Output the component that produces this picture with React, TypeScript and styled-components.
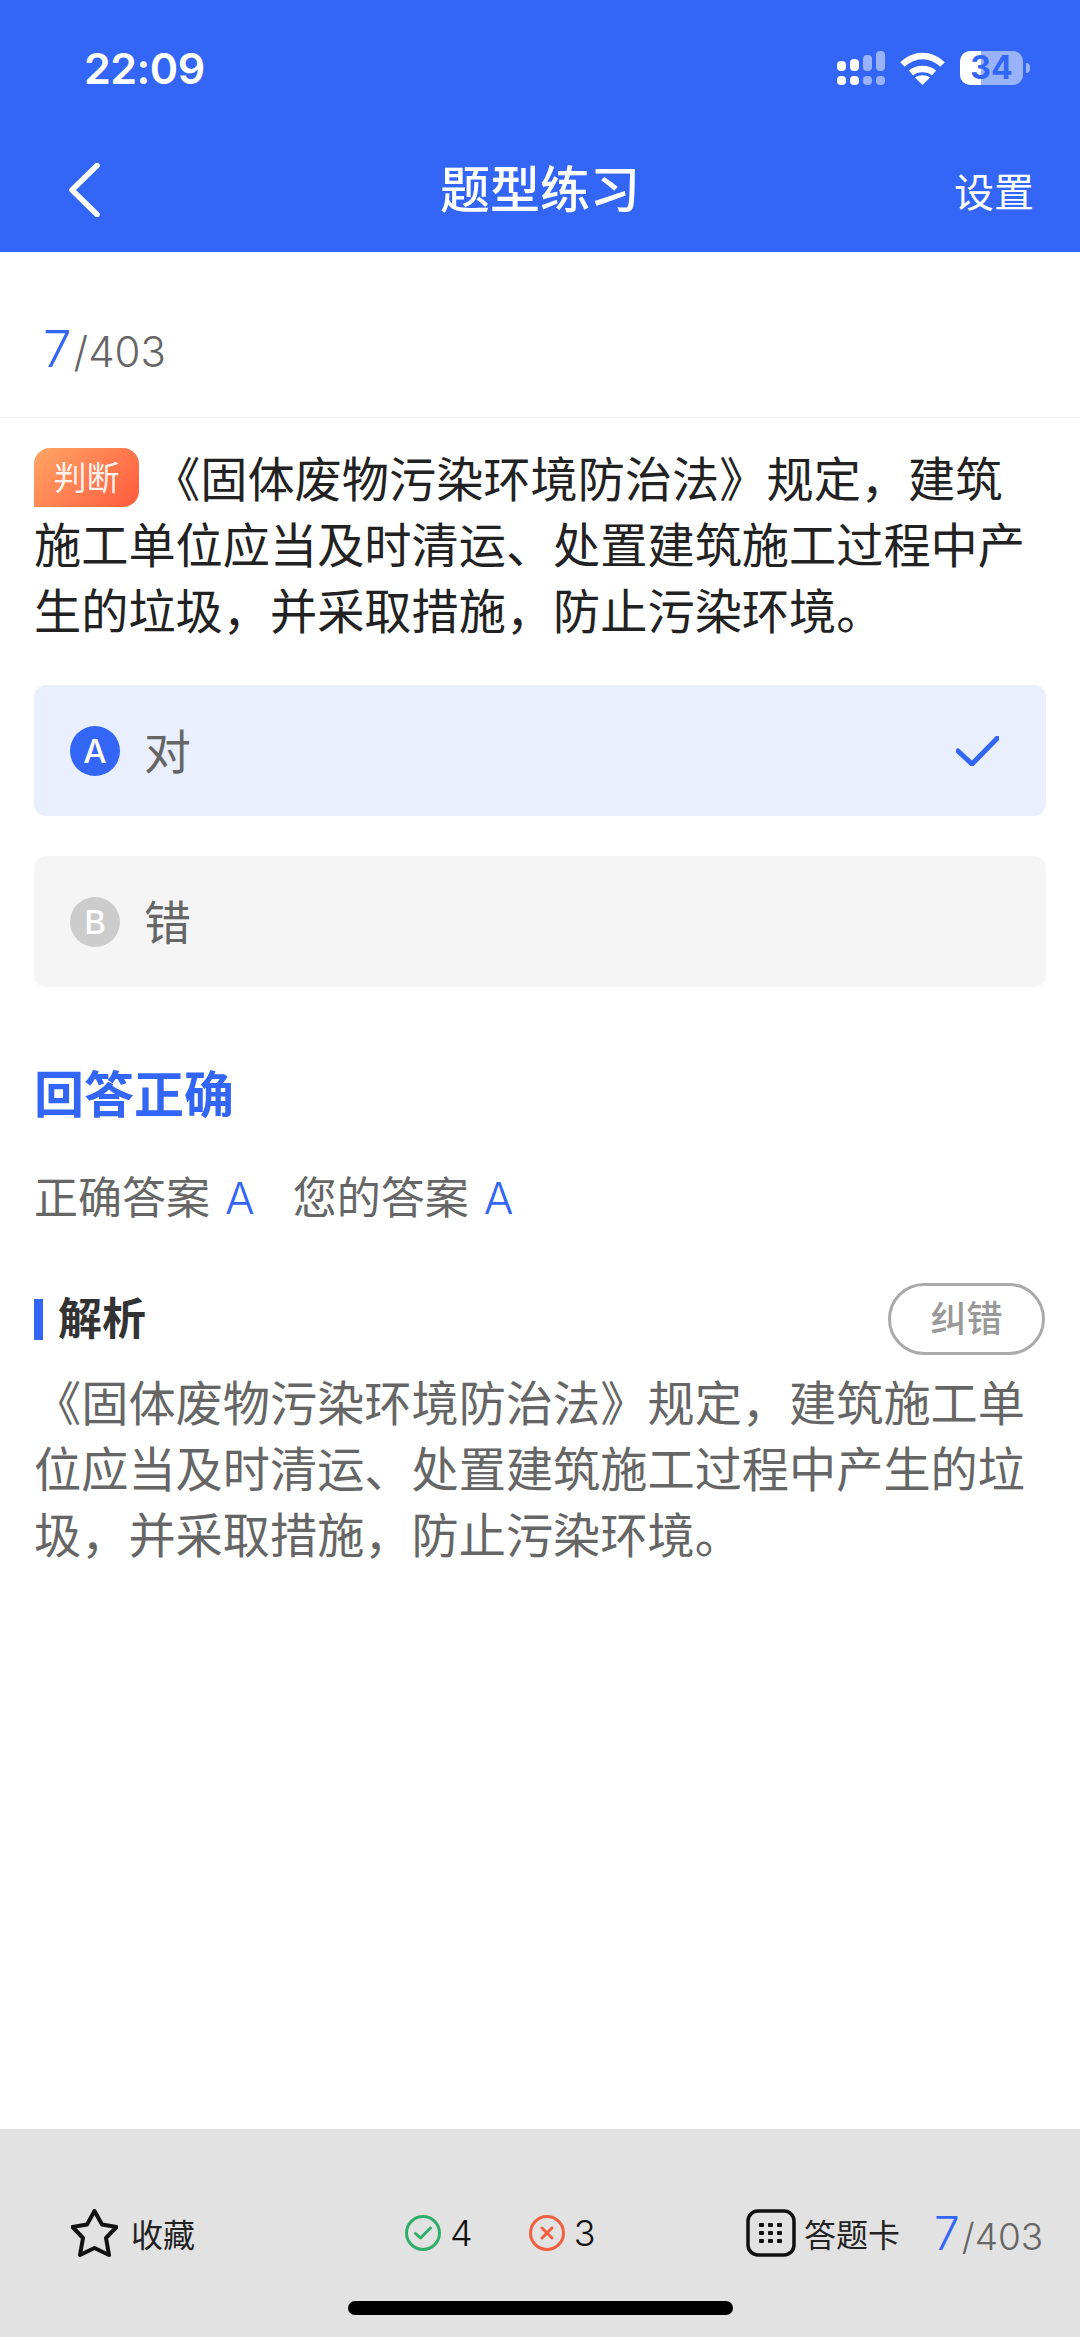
import React from "react";
import styled, { createGlobalStyle } from "styled-components";

const BLUE = "#3366f6";
const FONT = `Inter, "Noto Sans CJK SC", sans-serif`;

const Global = createGlobalStyle`
  html, body { margin: 0; padding: 0; background: #fff; }
  * { box-sizing: border-box; }
  body { font-family: ${FONT}; }
`;

const Page = styled.div`
  width: 1080px;
  height: 2337px;
  display: flex;
  flex-direction: column;
  overflow: hidden;
  background: #fff;
`;

const Header = styled.header`
  background: ${BLUE};
  color: #fff;
  height: 252px;
`;

const StatusBar = styled.div`
  height: 136px;
  display: flex;
  align-items: center;
  justify-content: space-between;
  padding: 0 50px 0 84px;
`;

const Time = styled.div`
  font-size: 43px;
  font-weight: 600;
  letter-spacing: -0.5px;
`;

const StatusIcons = styled.div`
  display: flex;
  align-items: center;
`;

const WifiIcon = styled.svg`
  margin: 0 15px;
`;

const Battery = styled.div`
  width: 63px;
  height: 34px;
  border-radius: 10px;
  background: linear-gradient(90deg, #fff 33.5%, rgba(255, 255, 255, 0.5) 33.5%);
  color: ${BLUE};
  font-size: 32px;
  font-weight: 700;
  line-height: 34px;
  text-align: center;
`;

const BatteryTip = styled.div`
  width: 4px;
  height: 10px;
  margin-left: 3px;
  border-radius: 0 4px 4px 0;
  background: rgba(255, 255, 255, 0.5);
`;

const NavBar = styled.nav`
  height: 116px;
  padding: 0 46px 8px;
  display: grid;
  grid-template-columns: 1fr auto 1fr;
  align-items: center;
`;

const BackIcon = styled.svg`
  display: block;
  margin-left: 22px;
`;

const Title = styled.h1`
  margin: 0;
  font-size: 50px;
  line-height: 60px;
  font-weight: 500;
`;

const NavAction = styled.div`
  justify-self: end;
  font-size: 40px;
  font-weight: 400;
`;

const ProgressRow = styled.div`
  height: 166px;
  padding: 28px 0 0 43px;
  display: flex;
  align-items: center;
  border-bottom: 1px solid #f0f0f0;
`;

const Counter = styled.div<{ $big: number; $small: number }>`
  display: flex;
  align-items: baseline;
  font-weight: 300;
  color: #666;
  font-size: ${(p) => p.$small}px;
  span {
    color: ${BLUE};
    font-size: ${(p) => p.$big}px;
    margin-right: 2px;
  }
`;

const Question = styled.p`
  margin: 29px 36px 0 34px;
  font-size: 47.2px;
  line-height: 66px;
  color: #222;
`;

const TypeTag = styled.span`
  display: inline-block;
  vertical-align: top;
  width: 105px;
  height: 59px;
  margin: 1px 14px 0 0;
  border-radius: 16px 16px 16px 0;
  background: linear-gradient(135deg, #ffa566 0%, #ff5a3c 100%);
  color: rgba(255, 255, 255, 0.92);
  font-size: 33px;
  line-height: 60px;
  text-align: center;
`;

const Options = styled.div`
  margin: 40px 34px 0;
  display: flex;
  flex-direction: column;
  gap: 40px;
`;

const Option = styled.div<{ $active?: boolean }>`
  height: 131px;
  padding: 0 47px 0 36px;
  display: flex;
  align-items: center;
  border-radius: 12px;
  background: ${(p) => (p.$active ? "#e9effd" : "#f5f5f5")};
`;

const OptionBadge = styled.div<{ $active?: boolean }>`
  width: 50px;
  height: 50px;
  border-radius: 50%;
  background: ${(p) => (p.$active ? BLUE : "#cccccc")};
  color: #fff;
  font-size: 33px;
  font-weight: 500;
  line-height: 50px;
  text-align: center;
`;

const OptionText = styled.div`
  margin-left: 24px;
  padding-bottom: 5px;
  flex: 1;
  font-size: 47px;
  color: #666;
`;

const ResultTitle = styled.h2`
  margin: 73px 0 0 34px;
  font-size: 50px;
  line-height: 70px;
  font-weight: 700;
  color: ${BLUE};
`;

const Answers = styled.div`
  margin: 38px 0 0 34px;
  font-size: 44px;
  line-height: 60px;
  color: #666;
  display: flex;
`;

const AnswerValue = styled.span`
  margin-left: 15px;
  margin-right: 38px;
  color: ${BLUE};
  font-weight: 300;
`;

const AnalysisHead = styled.div`
  margin: 55px 35px 0 34px;
  display: flex;
  align-items: center;
  justify-content: space-between;
`;

const AnalysisLabel = styled.div`
  height: 41px;
  padding-left: 15px;
  border-left: 9px solid ${BLUE};
  font-size: 44px;
  line-height: 41px;
  font-weight: 700;
  color: #333;
`;

const ReportButton = styled.div`
  width: 157px;
  height: 72px;
  border: 3px solid #aaa;
  border-radius: 36px;
  color: #999;
  font-size: 36px;
  font-weight: 500;
  line-height: 66px;
  text-align: center;
`;

const Analysis = styled.p`
  margin: 16px 36px 0 34px;
  font-size: 47.2px;
  line-height: 66px;
  color: #666;
`;

const Footer = styled.footer`
  margin-top: auto;
  height: 208px;
  background: #e2e2e2;
  padding-top: 80px;
  display: flex;
  flex-direction: column;
`;

const FooterRow = styled.div`
  height: 48px;
  padding-left: 71px;
  display: grid;
  grid-template-columns: 334px 341px 1fr;
  grid-template-rows: 48px;
`;

const FooterGroup = styled.div`
  height: 48px;
  display: flex;
  align-items: center;
`;

const FooterLabel = styled.span<{ $gap: number }>`
  margin-left: ${(p) => p.$gap}px;
  font-size: 32px;
  color: #222;
`;

const Stat = styled.span`
  margin: 0 56px 0 9px;
  font-size: 36px;
  font-weight: 300;
  color: #111;
`;

const FooterCounter = styled(Counter)`
  margin-left: 34px;
`;

const HomeBar = styled.div`
  align-self: center;
  width: 385px;
  height: 14px;
  margin-top: 44px;
  border-radius: 7px;
  background: #000;
`;

const SignalIcon = () => (
  <svg width="48" height="34" viewBox="0 0 48 34">
    <g fill="#fff">
      <rect x="0" y="10" width="9" height="10" rx="4" />
      <rect x="13" y="8" width="9" height="12" rx="4" />
      <rect x="0" y="25" width="9" height="9" rx="4" />
      <rect x="13" y="25" width="9" height="9" rx="4" />
    </g>
    <g fill="#fff" opacity="0.5">
      <rect x="26" y="4" width="9" height="16" rx="4" />
      <rect x="39" y="0" width="9" height="20" rx="4" />
      <rect x="26" y="25" width="9" height="9" rx="4" />
      <rect x="39" y="25" width="9" height="9" rx="4" />
    </g>
  </svg>
);

const Wifi = () => (
  <WifiIcon width="45" height="33" viewBox="0 0 45 33">
    <g fill="none" stroke="#fff" strokeWidth="6.5">
      <path d="M2.5 12.5C14 1 31 1 42.5 12.5" />
      <path d="M11 21C17 15.5 28 15.5 34 21" />
    </g>
    <path d="M15 25.5C19.5 22.5 25.5 22.5 30 25.5L22.5 33Z" fill="#fff" />
  </WifiIcon>
);

export default function App() {
  return (
    <Page>
      <Global />
      <Header>
        <StatusBar>
          <Time>22:09</Time>
          <StatusIcons>
            <SignalIcon />
            <Wifi />
            <Battery>34</Battery>
            <BatteryTip />
          </StatusIcons>
        </StatusBar>
        <NavBar>
          <BackIcon width="32" height="54" viewBox="0 0 32 54">
            <path d="M29 2.5L4 27L29 51.5" fill="none" stroke="#fff" strokeWidth="5.5" strokeLinecap="round" strokeLinejoin="round" />
          </BackIcon>
          <Title>题型练习</Title>
          <NavAction>设置</NavAction>
        </NavBar>
      </Header>

      <ProgressRow>
        <Counter $big={51} $small={42}>
          <span>7</span>/403
        </Counter>
      </ProgressRow>

      <Question>
        <TypeTag>判断</TypeTag>
        《固体废物污染环境防治法》规定，建筑施工单位应当及时清运、处置建筑施工过程中产生的垃圾，并采取措施，防止污染环境。
      </Question>

      <Options>
        <Option $active>
          <OptionBadge $active>A</OptionBadge>
          <OptionText>对</OptionText>
          <svg width="43" height="30" viewBox="0 0 43 30">
            <path d="M2 15L16 28L41.5 2" fill="none" stroke={BLUE} strokeWidth="5" strokeLinecap="round" strokeLinejoin="round" />
          </svg>
        </Option>
        <Option>
          <OptionBadge>B</OptionBadge>
          <OptionText>错</OptionText>
        </Option>
      </Options>

      <ResultTitle>回答正确</ResultTitle>
      <Answers>
        正确答案<AnswerValue>A</AnswerValue>
        您的答案<AnswerValue>A</AnswerValue>
      </Answers>

      <AnalysisHead>
        <AnalysisLabel>解析</AnalysisLabel>
        <ReportButton>纠错</ReportButton>
      </AnalysisHead>
      <Analysis>
        《固体废物污染环境防治法》规定，建筑施工单位应当及时清运、处置建筑施工过程中产生的垃圾，并采取措施，防止污染环境。
      </Analysis>

      <Footer>
        <FooterRow>
          <FooterGroup>
            <svg width="47" height="48" viewBox="0 0 47 48">
              <path d="M23.5 2L31 15.5L45.5 18L35 29L38 46L23.5 39L9 46L12 29L1.5 18L16 15.5Z" fill="none" stroke="#111" strokeWidth="4" strokeLinejoin="round" />
            </svg>
            <FooterLabel $gap={13}>收藏</FooterLabel>
          </FooterGroup>
          <FooterGroup>
            <svg width="36" height="36" viewBox="0 0 36 36">
              <circle cx="18" cy="18" r="16.5" fill="none" stroke="#2fae6a" strokeWidth="3" />
              <path d="M10.5 18.5L15.5 23L25.5 13" fill="none" stroke="#2fae6a" strokeWidth="3" strokeLinecap="round" strokeLinejoin="round" />
            </svg>
            <Stat>4</Stat>
            <svg width="36" height="36" viewBox="0 0 36 36">
              <circle cx="18" cy="18" r="16.5" fill="none" stroke="#f2603f" strokeWidth="3" />
              <path d="M13 13L23 23M23 13L13 23" fill="none" stroke="#f2603f" strokeWidth="3" strokeLinecap="round" />
            </svg>
            <Stat>3</Stat>
          </FooterGroup>
          <FooterGroup>
            <svg width="50" height="48" viewBox="0 0 50 48">
              <rect x="2" y="2" width="46" height="44" rx="10" fill="none" stroke="#111" strokeWidth="3.5" />
              <g fill="#111">
                {[14, 22, 30].map((y) =>
                  [13, 22, 31].map((x) => <rect key={`${x}-${y}`} x={x} y={y} width="5" height="4" rx="1" />)
                )}
              </g>
            </svg>
            <FooterLabel $gap={8}>答题卡</FooterLabel>
            <FooterCounter $big={46} $small={37}>
              <span>7</span>/403
            </FooterCounter>
          </FooterGroup>
        </FooterRow>
        <HomeBar />
      </Footer>
    </Page>
  );
}
